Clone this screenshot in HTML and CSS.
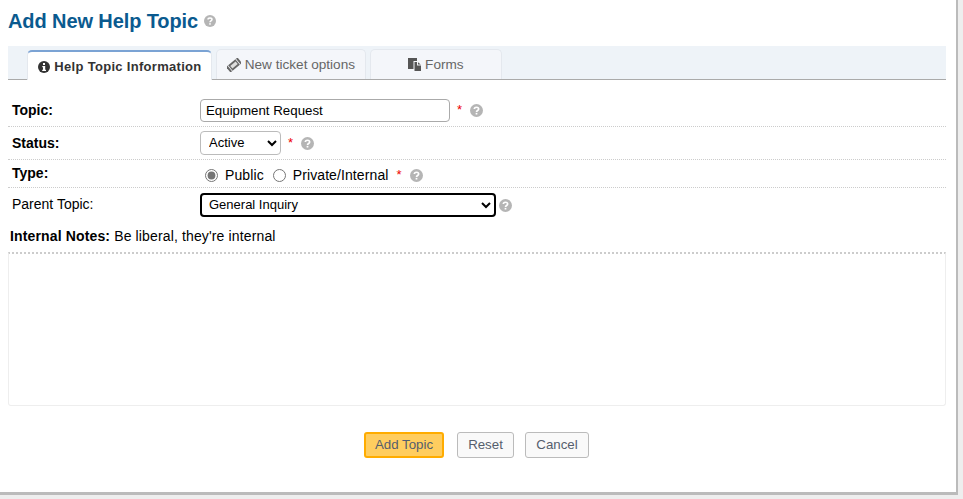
FILE: index.html
```html
<!DOCTYPE html>
<html lang="en">
<head>
  <meta charset="UTF-8" />
  <title>Add New Help Topic</title>
  <link rel="stylesheet" href="styles.css">
</head>
<body>
  <svg class="defs" width="0" height="0" aria-hidden="true">
    <symbol id="help" viewBox="0 0 12 12">
      <circle cx="6" cy="6" r="6" fill="currentColor"/>
      <path d="M4 4.6C4 3.5 4.9 3 6 3s2 .6 2 1.6c0 1.400-2 1.300-2 2.700" fill="none" stroke="#fff" stroke-width="1.500"/>
      <rect x="5.200" y="8.200" width="1.600" height="1.500" fill="#fff"/>
    </symbol>
  </svg>

  <div class="page">
    <h1>Add New Help Topic <svg class="help help-title"><use href="#help"/></svg></h1>

    <ul class="tabs">
      <li class="tab active">
        <svg class="tab-icon" viewBox="0 0 12 12"><circle cx="6" cy="6" r="6" fill="#333"/><rect x="5" y="2" width="2" height="2" fill="#fff"/><path d="M4.300 5h2.900v3.800h.8V10H4.200V8.800H5V6.200h-.7z" fill="#fff"/></svg>
        Help Topic Information
      </li>
      <li class="tab">
        <svg class="tab-icon tab-icon-ticket" viewBox="0 0 14 14"><g transform="rotate(-40 7 7)"><rect x="-0.500" y="3.500" width="15" height="7" fill="#666"/><rect x="3.500" y="5.300" width="7" height="3.400" fill="#ddd"/><rect x="1.500" y="3.500" width="0.800" height="7" fill="#f4f6fa"/><rect x="11.700" y="3.500" width="0.800" height="7" fill="#f4f6fa"/></g></svg>
        New ticket options
      </li>
      <li class="tab tab-forms">
        <svg class="tab-icon tab-icon-forms" viewBox="0 0 13 13"><path d="M0 0h9v3H5.500v8H0z" fill="#555"/><path d="M6.500 4H9v3.500h4V13H6.500z" fill="#555"/><path d="M10 4.200 12.800 6.500H10z" fill="#555"/></svg>
        Forms
      </li>
    </ul>

    <form class="topic-form">
      <div class="row row-topic">
        <label class="label">Topic:</label>
        <div class="field">
          <input class="text-input" type="text" value="Equipment Request" />
          <span class="req">*</span>
          <svg class="help"><use href="#help"/></svg>
        </div>
      </div>
      <div class="row row-status">
        <label class="label">Status:</label>
        <div class="field">
          <select class="status-select"><option>Active</option><option>Disabled</option></select>
          <span class="req">*</span>
          <svg class="help"><use href="#help"/></svg>
        </div>
      </div>
      <div class="row row-type">
        <label class="label label-up">Type:</label>
        <div class="field field-radios">
          <input class="radio" type="radio" name="type" checked />
          <span class="radio-text">Public</span>
          <input class="radio" type="radio" name="type" />
          <span class="radio-text">Private/Internal</span>
          <span class="req">*</span>
          <svg class="help"><use href="#help"/></svg>
        </div>
      </div>
      <div class="row row-parent">
        <label class="label label-plain">Parent Topic:</label>
        <div class="field">
          <select class="parent-select"><option>General Inquiry</option></select>
          <svg class="help"><use href="#help"/></svg>
        </div>
      </div>

      <p class="notes-title"><b>Internal Notes:</b> Be liberal, they're internal</p>
      <div class="notes-box"></div>

      <div class="buttons">
        <button class="btn btn-primary" type="submit">Add Topic</button>
        <button class="btn btn-reset" type="reset">Reset</button>
        <button class="btn btn-cancel" type="button">Cancel</button>
      </div>
    </form>
  </div>
</body>
</html>
```

FILE: styles.css
```css
html, body {
  margin: 0;
  height: 499px;
  overflow: hidden;
}
body {
  background: #eee;
  font-family: "Liberation Sans", Arial, sans-serif;
  font-size: 14px;
  color: #000;
}
.defs {
  display: block;
  height: 0;
}
.page {
  box-sizing: border-box;
  width: 958px;
  height: 495px;
  background: #fff;
  border-right: 2px solid #bbb;
  border-bottom: 3px solid #bbb;
  padding: 0 10px 0 8px;
}
h1 {
  margin: 0;
  padding-top: 10px;
  height: 46px;
  box-sizing: border-box;
  font-size: 20px;
  line-height: 22px;
  font-weight: bold;
  letter-spacing: -0.1px;
  color: #0a5a8f;
}
.help {
  width: 13px;
  height: 13px;
  color: #b5b5b5;
  vertical-align: -2px;
}
.help-title {
  width: 12px;
  height: 12px;
  margin-left: 0;
  vertical-align: 1px;
}

/* tabs */
.tabs {
  display: flex;
  align-items: flex-end;
  margin: 0;
  padding: 0 0 0 19px;
  height: 34px;
  box-sizing: border-box;
  list-style: none;
  background: #eef3f8;
  border-bottom: 1px solid #aaa;
}
.tab {
  box-sizing: border-box;
  width: 150px;
  height: 30px;
  margin-right: 4px;
  padding-top: 7px;
  text-align: center;
  font-size: 13.6px;
  line-height: 16px;
  color: #666;
  background: #f4f6fa;
  border: 1px solid #e4e8ee;
  border-bottom: none;
  border-radius: 5px 5px 0 0;
}
.tab-forms {
  width: 132px;
}
.tab.active {
  position: relative;
  top: 1px;
  width: 185px;
  height: 30px;
  margin-right: 4px;
  padding-top: 7px;
  padding-left: 1px;
  font-weight: bold;
  font-size: 13px;
  letter-spacing: 0.3px;
  color: #333;
  background: #fff;
  border-color: #e4e8ee;
  border-top: 2px solid #7ba3d4;
}
.tab-icon {
  width: 12px;
  height: 12px;
  vertical-align: -2px;
}
.tab-icon-ticket {
  width: 14px;
  height: 14px;
  vertical-align: -3px;
}
.tab-icon-forms {
  width: 13px;
  height: 13px;
}

/* form rows */
.row {
  display: flex;
  box-sizing: border-box;
  border-bottom: 1px dotted #ccc;
  padding-left: 4px;
}
.row-topic {
  margin-top: 15px;
  height: 32px;
  align-items: flex-start;
  padding-top: 3px;
}
.row-status {
  height: 33px;
  padding-top: 4px;
}
.row-type {
  height: 28px;
}
.row-parent {
  height: 34px;
  border-bottom: none;
  padding-top: 5px;
}
.label {
  width: 188px;
  flex: none;
  font-weight: bold;
  line-height: 24px;
}
.label-up {
  line-height: 27px;
}
.label-plain {
  font-weight: normal;
  line-height: 22px;
}
.field {
  display: flex;
  align-items: center;
  height: 24px;
}
.req {
  color: #e00;
  font-size: 13px;
  margin-left: 7px;
  margin-right: 8px;
  position: relative;
  top: -1px;
}
.text-input {
  box-sizing: border-box;
  width: 250px;
  height: 23px;
  padding: 1px 5px;
  border: 1px solid #aaa;
  border-radius: 4px;
  background: #fff;
  font: 13.3px "Liberation Sans", Arial, sans-serif;
  color: #000;
  outline: none;
}
.status-select {
  box-sizing: border-box;
  width: 81px;
  height: 24px;
  border: 1px solid #bbb;
  border-radius: 4px;
  background: #fff;
  padding-left: 4px;
  padding-bottom: 2px;
  font: 13px "Liberation Sans", Arial, sans-serif;
}
.parent-select {
  box-sizing: border-box;
  width: 296px;
  height: 24px;
  border: 2px solid #000;
  border-radius: 4px;
  background: #fff;
  padding-left: 3px;
  padding-bottom: 2px;
  margin-right: 3px;
  font: 13px "Liberation Sans", Arial, sans-serif;
  outline: none;
}
.field-radios {
  padding-top: 3px;
  padding-left: 4px;
}
.radio {
  width: 13px;
  height: 13px;
  margin: 0 7px 0 1px;
  accent-color: #757575;
}
.radio-text {
  margin-right: 8px;
  font-size: 14px;
  letter-spacing: 0.1px;
}
.field-radios .req {
  margin-left: 0;
}

/* notes */
.notes-title {
  margin: 0 0 0 2px;
  height: 30px;
  padding-top: 6px;
  box-sizing: border-box;
  line-height: 16px;
  font-size: 14px;
  letter-spacing: 0.14px;
}
.notes-box {
  box-sizing: border-box;
  height: 154px;
  border: 1px solid #eee;
  border-top: 2px dotted #ccc;
  border-radius: 0 0 3px 3px;
}

/* buttons */
.buttons {
  display: flex;
  margin-top: 26px;
  padding-left: 356px;
}
.btn {
  box-sizing: border-box;
  height: 26px;
  padding: 0 0 2px;
  border: 1px solid #bbb;
  border-radius: 3px;
  background: #f9f9f9;
  color: #555e6d;
  font: 13.3px "Liberation Sans", Arial, sans-serif;
}
.btn-primary {
  width: 80px;
  margin-right: 13px;
  background: #ffcd5f;
  border: 2px solid #ffac00;
}
.btn-reset {
  width: 57px;
  margin-right: 11px;
}
.btn-cancel {
  width: 64px;
}
```
